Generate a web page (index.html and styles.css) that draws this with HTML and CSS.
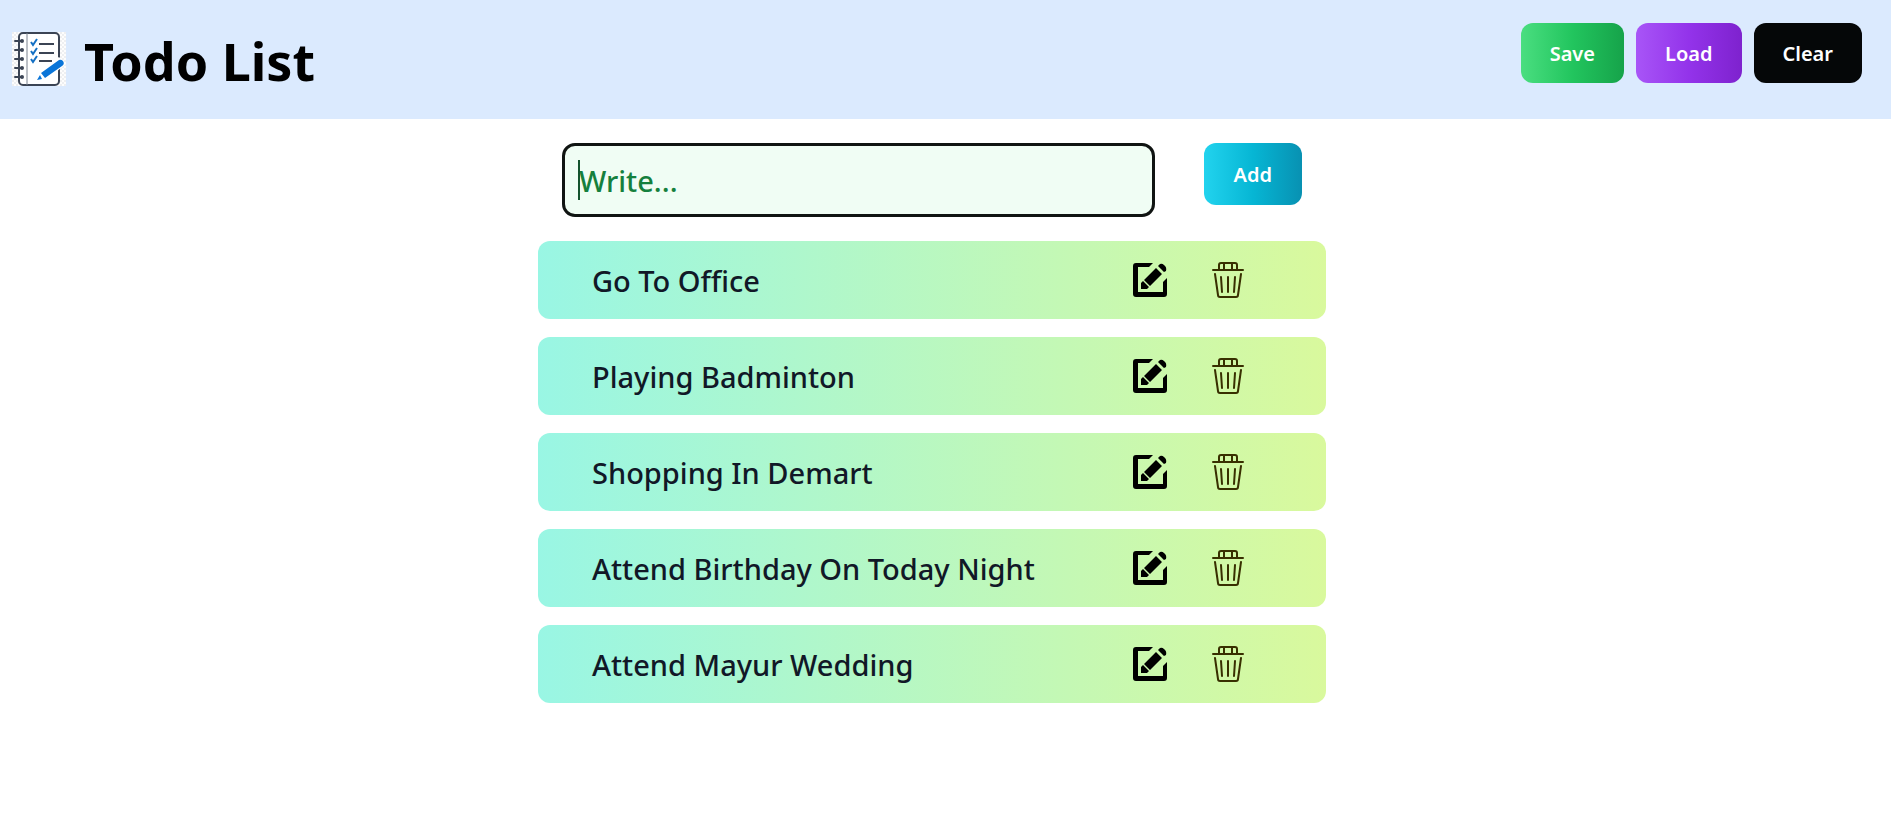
FILE: index.html
```
<!DOCTYPE html>
<html lang="en">
<head>
<meta charset="utf-8">
<meta name="viewport" content="width=device-width, initial-scale=1">
<title>Todo List</title>
<link rel="stylesheet" href="styles.css">
</head>
<body>
<svg class="sprite" aria-hidden="true">
  <symbol id="edit" viewBox="0 0 34 34">
    <path d="M20 0 16 4H5V29H30V19L34 15V31Q34 34 31 34H3Q0 34 0 31V3Q0 0 3 0Z"/>
    <path d="M8 26V20L10 18 16 24 14 26ZM11 17 23 5 29 11 17 23ZM25 3 27 1Q29 0 31 2 34 4 33 8L31 9Z"/>
  </symbol>
  <symbol id="trash" viewBox="0 0 32 36">
    <path fill="none" stroke="currentColor" stroke-width="2" stroke-linecap="round" stroke-linejoin="round" d="M1 8H31M7 7V3Q7 1 9 1H23Q25 1 25 3V7M12 2V7M20 2V7M3 12 6 33Q6 35 8 35H24Q26 35 26 33L29 12M9 15 10 30M16 15V30M23 15 22 30"/>
  </symbol>
</svg>
<header class="header">
  <div class="brand">
    <svg class="logo" viewBox="0 0 54 54" aria-hidden="true">
      <defs>
        <pattern id="checks" width="4" height="4" patternUnits="userSpaceOnUse">
          <path fill="#fdfdfd" d="M0 0h4v4H0z"/>
          <path fill="#eeeff1" d="M0 0h2v2H0zM2 2h2v2H2z"/>
        </pattern>
      </defs>
      <path fill="url(#checks)" d="M0 0h54v54H0z"/>
      <rect x="7" y="1" width="40" height="52" rx="4" fill="#fff" stroke="#3b4454" stroke-width="2"/>
      <path d="M15 1V53" stroke="#7b828e"/>
      <path d="M3 9H10M3 18H10M3 27H10M3 36H10M3 45H10" stroke="#3b4454" stroke-width="2" stroke-linecap="round"/>
      <g fill="#3b4454"><circle cx="10" cy="9" r="2"/><circle cx="10" cy="18" r="2"/><circle cx="10" cy="27" r="2"/><circle cx="10" cy="36" r="2"/><circle cx="10" cy="45" r="2"/></g>
      <path d="M27 12H42M27 21H42M27 29H40" stroke="#3b4454" stroke-width="2"/>
      <path d="M19 10 21 13 25 7M19 19 21 22 25 16M19 27 21 30 25 24" fill="none" stroke="#1470c4" stroke-width="2"/>
      <path d="M24 48 28 38 47 25 54 32 34 48Z" fill="#fff"/>
      <path d="M29 41 47 28Q49 27 51 29 53 32 50 34L33 46ZM28 43 30 47 25 48Z" fill="#0a75d8"/>
    </svg>
    <h1 class="title">Todo List</h1>
  </div>
  <div class="actions">
    <button class="btn btn-save" type="button">Save</button>
    <button class="btn btn-load" type="button">Load</button>
    <button class="btn btn-clear" type="button">Clear</button>
  </div>
</header>
<main class="main">
  <form class="entry">
    <div class="field-wrap">
      <input class="field" type="text" placeholder="Write..." aria-label="New todo" autofocus>
      <span class="caret" aria-hidden="true"></span>
    </div>
    <button class="btn btn-add" type="button">Add</button>
  </form>
  <ul class="list">
    <li class="item"><span class="text">Go To Office</span><button class="icon" type="button" aria-label="Edit"><svg class="edit"><use href="#edit"/></svg></button><button class="icon" type="button" aria-label="Delete"><svg class="trash"><use href="#trash"/></svg></button></li>
    <li class="item"><span class="text">Playing Badminton</span><button class="icon" type="button" aria-label="Edit"><svg class="edit"><use href="#edit"/></svg></button><button class="icon" type="button" aria-label="Delete"><svg class="trash"><use href="#trash"/></svg></button></li>
    <li class="item"><span class="text">Shopping In Demart</span><button class="icon" type="button" aria-label="Edit"><svg class="edit"><use href="#edit"/></svg></button><button class="icon" type="button" aria-label="Delete"><svg class="trash"><use href="#trash"/></svg></button></li>
    <li class="item"><span class="text">Attend Birthday On Today Night</span><button class="icon" type="button" aria-label="Edit"><svg class="edit"><use href="#edit"/></svg></button><button class="icon" type="button" aria-label="Delete"><svg class="trash"><use href="#trash"/></svg></button></li>
    <li class="item"><span class="text">Attend Mayur Wedding</span><button class="icon" type="button" aria-label="Edit"><svg class="edit"><use href="#edit"/></svg></button><button class="icon" type="button" aria-label="Delete"><svg class="trash"><use href="#trash"/></svg></button></li>
  </ul>
</main>
</body>
</html>
```
FILE: styles.css
```
* { box-sizing: border-box; }
body { margin: 0; background: #fff; font-family: "Noto Sans", "Open Sans", sans-serif; }
.sprite { display: none; }
.header { display: flex; justify-content: space-between; align-items: flex-start; padding: 21px 29px 22px 12px; background: #dbeafe; }
.brand { display: flex; align-items: center; gap: 18px; }
.logo { width: 54px; height: 54px; }
.title { margin: 0; padding-top: 4px; font-size: 52px; line-height: 72px; font-weight: 700; color: #000; }
.actions { display: flex; gap: 12px; padding-top: 2px; }
.btn { border: 0; border-radius: 12px; padding: 16px 29px 14px; font: 600 20px/30px "Noto Sans", "Open Sans", sans-serif; color: #fff; }
.btn-save { background: linear-gradient(to right, #4ade80, #22c55e, #16a34a); }
.btn-load { background: linear-gradient(to right, #a855f7, #9333ea, #7e22ce); }
.btn-clear { background: #050708; }
.btn-add { padding: 17px 30px 15px; background: linear-gradient(to right, #22d3ee, #06b6d4, #0891b2); }
.main { display: flex; flex-direction: column; align-items: center; gap: 24px; padding: 24px 27px 24px 0; }
.entry { display: flex; align-items: flex-start; justify-content: space-between; width: 100%; max-width: 740px; }
.field-wrap { position: relative; flex: 0 1 593px; min-width: 0; }
.field { display: block; width: 100%; height: 74px; padding: 0 14px; border: 3px solid #101412; border-radius: 13px; outline: 0; background: #f0fdf4; color: #14532d; caret-color: transparent; font: 500 29px/40px "Noto Sans", "Open Sans", sans-serif; }
.field::placeholder { color: #15803d; opacity: 1; }
.caret { position: absolute; left: 16px; top: 17px; width: 2px; height: 40px; background: #14532d; pointer-events: none; }
.list { display: flex; flex-direction: column; gap: 18px; width: 100%; max-width: 788px; margin: 0; padding: 0; list-style: none; }
.item { display: flex; align-items: center; padding: 17px 82px 17px 54px; border-radius: 12px; background: linear-gradient(to right, #99f6e4, #d9f99d); }
.text { flex: 1; padding-top: 2px; font-size: 29px; line-height: 42px; font-weight: 500; color: #111827; }
.icon { display: flex; margin-left: 45px; padding: 0; border: 0; background: none; color: #000; }
.edit { width: 34px; height: 34px; fill: currentColor; }
.trash { width: 32px; height: 36px; color: #382f00; }
```
